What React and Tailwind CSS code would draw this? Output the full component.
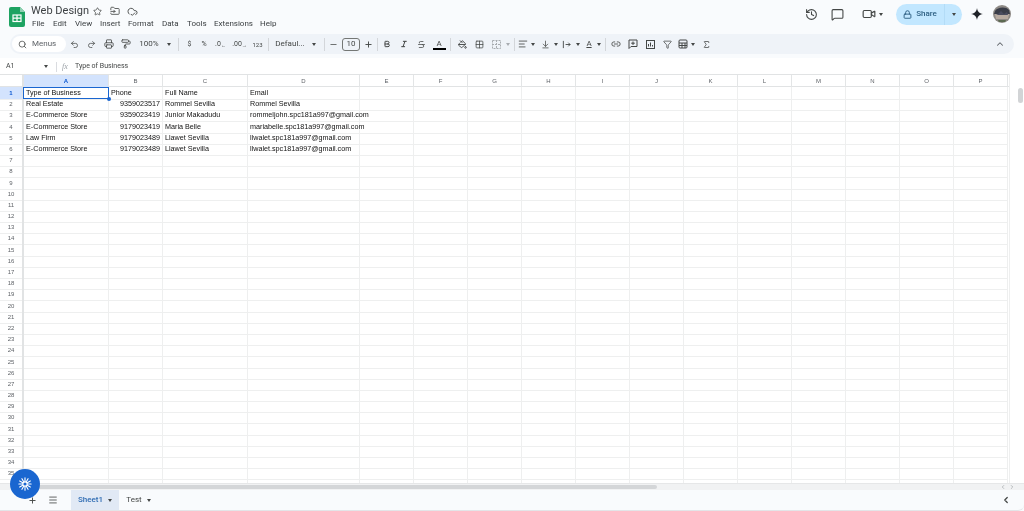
import { Fragment } from 'react';
import {
  Search, Undo2, Redo2, Printer, PaintRoller, Minus, Plus, Bold, Italic, Strikethrough,
  PaintBucket, Grid2x2, AlignLeft, ArrowDownToLine, Link2, Filter, Sigma, ChevronUp, ChevronLeft,
  ChevronRight, Star, FolderInput, CloudCheck, History, MessageSquare, Video, Lock, Menu,
} from 'lucide-react';

const menus = [
  ['File', 'w-[21px]'],
  ['Edit', 'w-[22px]'],
  ['View', 'w-[25px]'],
  ['Insert', 'w-[28px]'],
  ['Format', 'w-[34px]'],
  ['Data', 'w-[25px]'],
  ['Tools', 'w-[27px]'],
  ['Extensions', 'w-[46px]'],
  ['Help', 'w-[25px]'],
];

const columns = ['A', 'B', 'C', 'D', 'E', 'F', 'G', 'H', 'I', 'J', 'K', 'L', 'M', 'N', 'O', 'P'];

const data = [
  ['Type of Business', 'Phone', 'Full Name', 'Email'],
  ['Real Estate', '9359023517', 'Rommel Sevilla', 'Rommel Sevilla'],
  ['E-Commerce Store', '9359023419', 'Junior Makadudu', 'rommeljohn.spc181a997@gmail.com'],
  ['E-Commerce Store', '9179023419', 'Maria Belle', 'mariabelle.spc181a997@gmail.com'],
  ['Law Firm', '9179023489', 'Llawet Sevilla', 'llwalet.spc181a997@gmail.com'],
  ['E-Commerce Store', '9179023489', 'Llawet Sevilla', 'llwalet.spc181a997@gmail.com'],
];

const gridCols = 'grid grid-cols-[24px_85px_54px_85px_112px_repeat(12,54px)]';

const Caret = ({ className = '' }) => (
  <span className={`block shrink-0 w-0 h-0 border-x-[2.5px] border-x-transparent border-t-[3px] border-t-[#444746] ${className}`} />
);

const Divider = ({ w = 'w-[10px]' }) => (
  <div className={`${w} flex justify-center`}>
    <div className="w-px h-[13px] bg-[#d3d6da]" />
  </div>
);

const Tool = ({ w, children }) => (
  <div className={`${w} h-full flex items-center justify-center text-[#444746]`}>{children}</div>
);

const ToolCaret = ({ w = 'w-[9px]' }) => (
  <Tool w={w}>
    <Caret />
  </Tool>
);

const Toolbar = () => (
  <div className="mx-[10px] h-[20px] rounded-full bg-[#eff3f8] flex items-center pl-[2px] text-[#444746]">
    <div className="w-[54px] h-[16px] rounded-full bg-white flex items-center pl-[6px] gap-[5px] text-[8px]">
      <Search size={9} strokeWidth={2} />
      <span className="text-[#5f6368]">Menus</span>
    </div>
    <Tool w="w-[17px]"><Undo2 size={9} strokeWidth={2} /></Tool>
    <Tool w="w-[17px]"><Redo2 size={9} strokeWidth={2} /></Tool>
    <Tool w="w-[17px]"><Printer size={10} strokeWidth={2} /></Tool>
    <Tool w="w-[17px]"><PaintRoller size={10} strokeWidth={2} /></Tool>
    <Tool w="w-[30px]"><span className="text-[8px]">100%</span></Tool>
    <ToolCaret />
    <Divider />
    <Tool w="w-[13px]"><span className="text-[7px]">$</span></Tool>
    <Tool w="w-[16px]"><span className="text-[7px]">%</span></Tool>
    <Tool w="w-[17px]"><span className="text-[7px]">.0<sub className="text-[5px]">←</sub></span></Tool>
    <Tool w="w-[21px]"><span className="text-[7px]">.00<sub className="text-[5px]">→</sub></span></Tool>
    <Tool w="w-[15px]"><span className="text-[6px]">123</span></Tool>
    <Divider w="w-[6px]" />
    <Tool w="w-[38px]"><span className="text-[8px]">Defaul...</span></Tool>
    <ToolCaret w="w-[10px]" />
    <Divider />
    <Tool w="w-[9px]"><Minus size={9} strokeWidth={2} /></Tool>
    <div className="ml-[4px] w-[18px] h-[13px] rounded-[3px] border border-[#747775] flex items-center justify-center text-[8px]">10</div>
    <Tool w="w-[16px]"><Plus size={9} strokeWidth={2.5} /></Tool>
    <Divider w="w-[2px]" />
    <Tool w="w-[18px]"><Bold size={8} strokeWidth={3} /></Tool>
    <Tool w="w-[16px]"><Italic size={8} strokeWidth={3} /></Tool>
    <Tool w="w-[19px]"><Strikethrough size={9} strokeWidth={2} /></Tool>
    <Tool w="w-[16px]">
      <div className="flex flex-col items-center">
        <span className="text-[8px] leading-[9px]">A</span>
        <div className="w-[13px] h-[2px] bg-black" />
      </div>
    </Tool>
    <Divider w="w-[7px]" />
    <Tool w="w-[16px]"><PaintBucket size={9} strokeWidth={2.5} /></Tool>
    <Tool w="w-[18px]"><Grid2x2 size={9} strokeWidth={2} /></Tool>
    <Tool w="w-[16px]">
      <svg width="9" height="9" viewBox="0 0 9 9" fill="none" stroke="#a8acb0" strokeWidth="1" strokeDasharray="2 1">
        <rect x="0.5" y="0.5" width="8" height="8" />
        <path d="M4.500 0v9M0 4.500h9" />
      </svg>
    </Tool>
    <Tool w="w-[8px]"><Caret className="border-t-[#a8acb0]" /></Tool>
    <Divider w="w-[4px]" />
    <Tool w="w-[13px]"><AlignLeft size={10} strokeWidth={2} /></Tool>
    <ToolCaret w="w-[7px]" />
    <div className="w-[1px]" />
    <Tool w="w-[16px]"><ArrowDownToLine size={9} strokeWidth={2} /></Tool>
    <ToolCaret w="w-[5px]" />
    <Tool w="w-[17px]">
      <svg width="9" height="9" viewBox="0 0 10 10" fill="none" stroke="currentColor" strokeWidth="1">
        <path d="M1.500 1v8M4 5h5M7 3l2 2-2 2" />
      </svg>
    </Tool>
    <ToolCaret w="w-[6px]" />
    <Tool w="w-[16px]"><span className="text-[8px] underline">A</span></Tool>
    <ToolCaret w="w-[3px]" />
    <Divider w="w-[11px]" />
    <Tool w="w-[10px]"><Link2 size={10} strokeWidth={2} /></Tool>
    <Tool w="w-[23px]">
      <svg width="10" height="10" viewBox="0 0 10 10" fill="none" stroke="currentColor" strokeWidth="1">
        <path d="M1 1h8v6.500H3L1 9.500zM5 2.500v3.500M3.200 4.200h3.600" />
      </svg>
    </Tool>
    <Tool w="w-[12px]">
      <svg width="9" height="9" viewBox="0 0 9 9" fill="none" stroke="currentColor" strokeWidth="1">
        <rect x="0.500" y="0.500" width="8" height="8" />
        <path d="M2.500 6.500V4M4.500 6.500V2.500M6.500 6.500V5" />
      </svg>
    </Tool>
    <Tool w="w-[22px]"><Filter size={9} strokeWidth={2} /></Tool>
    <Tool w="w-[10px]">
      <svg width="10" height="10" viewBox="0 0 10 10" fill="none" stroke="currentColor" strokeWidth="1" className="shrink-0">
        <rect x="1" y="1" width="8" height="8" rx="1" />
        <path d="M1 4h8M4 4v5M7 4v5M1 6.500h8" />
      </svg>
    </Tool>
    <ToolCaret />
    <Tool w="w-[19px]"><Sigma size={9} strokeWidth={2} /></Tool>
    <div className="ml-auto mr-[9px] text-[#5f6368]"><ChevronUp size={10} strokeWidth={2.5} /></div>
  </div>
);

const Header = () => (
  <div className="h-[34px] flex pl-[9px] pt-[5px]">
    <svg width="16" height="20" viewBox="0 0 16 20" className="mt-[2px]">
      <path d="M2 0h9l5 5v13a2 2 0 0 1-2 2H2a2 2 0 0 1-2-2V2a2 2 0 0 1 2-2z" fill="#1ea362" />
      <path d="M11 0l5 5h-5z" fill="#8ed1b1" />
      <rect x="4" y="8" width="8" height="6.500" fill="none" stroke="#fff" strokeWidth="1.200" />
      <path d="M4 11.200h8M8 8v6.500" stroke="#fff" strokeWidth="1.200" />
    </svg>
    <div className="ml-[6px] flex flex-col">
      <div className="flex items-center h-[12px] text-[#444746]">
        <span className="text-[11px] text-[#3c4043] w-[62px]">Web Design</span>
        <Star size={9} strokeWidth={2} />
        <FolderInput size={10} strokeWidth={2} className="ml-[8px]" />
        <CloudCheck size={11} strokeWidth={2} className="ml-[7px]" />
      </div>
      <div className="flex mt-[1px] text-[8px] leading-[12px] text-[#3c4043]">
        {menus.map(([label, w]) => (
          <span key={label} className={`${w} pl-[1px]`}>{label}</span>
        ))}
      </div>
    </div>
    <div className="ml-auto flex items-center h-[20px] -mt-[1px] mr-[13px] text-[#444746]">
      <History size={13} strokeWidth={2} />
      <MessageSquare size={13} strokeWidth={2} className="ml-[13px]" />
      <Video size={14} strokeWidth={2} className="ml-[18px]" />
      <Caret className="ml-[3px]" />
      <div className="ml-[13px] w-[66px] h-[21px] rounded-full bg-[#c2e7ff] flex items-center text-[#2d5f82]">
        <div className="w-[49px] h-full flex items-center justify-center gap-[4px] border-r border-r-[#b3dcf7]">
          <Lock size={9} strokeWidth={2.5} />
          <span className="text-[8px] font-medium">Share</span>
        </div>
        <div className="flex-1 flex justify-center"><Caret className="border-t-[#1f3b52]" /></div>
      </div>
      <svg width="12" height="12" viewBox="0 0 14 14" className="ml-[9px]">
        <path d="M7 0c.6 4 2.500 6.200 7 7-4.500.8-6.400 3-7 7-.6-4-2.500-6.200-7-7 4.500-.8 6.400-3 7-7z" fill="#1f2328" />
      </svg>
      <svg width="18" height="18" viewBox="0 0 18 18" className="ml-[10px]">
        <circle cx="9" cy="9" r="9" fill="#8e8a86" />
        <path d="M2 6c2-4 11-5 14-1l1 4H1z" fill="#3a3d48" />
        <path d="M2 9h14l-1 5H3z" fill="#b7aaa0" />
        <path d="M5 9l3-3 3 3 3-2 1 3H3z" fill="#4a4c5e" />
        <path d="M5 15h8l-1 2H6z" fill="#5c6a52" />
      </svg>
    </div>
  </div>
);

const FormulaBar = () => (
  <div className="mt-[4px] h-[16px] pt-[1px] bg-white flex items-center text-[7px] text-[#444746]">
    <span className="w-[44px] pl-[6px]">A1</span>
    <Caret />
    <div className="ml-[8px] w-px h-[10px] bg-[#dadce0]" />
    <span className="ml-[5px] w-[13px] italic font-['Liberation_Serif',serif] text-[8px] text-[#9aa0a6]">fx</span>
    <span>Type of Business</span>
  </div>
);

const Grid = () => (
  <div className="relative flex-1 min-h-0 overflow-hidden bg-white font-['Liberation_Sans',sans-serif]">
    <div className={`${gridCols} h-[13px] border-y border-y-[#e1e3e4] bg-white text-[6px] leading-[12px] text-[#5f6368]`}>
      <div className="border-r-2 border-r-[#e1e3e4]" />
      {columns.map((c) => (
        <div
          key={c}
          className={`text-center border-r border-r-[#e3e5e6] ${c === 'A' ? 'bg-[#d3e3fd] font-bold text-[#0b57d0]' : ''}`}
        >
          {c}
        </div>
      ))}
    </div>
    {Array.from({ length: 36 }, (_, r) => (
      <div key={r} className={`${gridCols} h-[11.2px] text-[7.2px] leading-[12px] text-[#111111]`}>
        <div
          className={`text-center text-[6px] border-r-2 border-r-[#e1e3e4] border-b border-b-[#eeefef] ${
            r === 0 ? 'bg-[#d3e3fd] font-bold text-[#0b57d0]' : 'text-[#5f6368]'
          }`}
        >
          {r + 1}
        </div>
        {columns.map((c, i) => {
          const value = data[r]?.[i];
          const isNumber = i === 1 && r > 0;
          return (
            <div
              key={c}
              className={`border-r border-b border-r-[#eeefef] border-b-[#eeefef] px-[2px] whitespace-nowrap ${
                isNumber ? 'text-right' : ''
              }`}
            >
              {value}
            </div>
          );
        })}
      </div>
    ))}
    {/* active cell */}
    <div className="absolute left-[23px] top-[13px] w-[86px] h-[12px] border-[1.5px] border-[#1a66d0]" />
    <div className="absolute left-[107px] top-[23px] w-[4px] h-[4px] rounded-full bg-[#1a66d0]" />
    {/* vertical scrollbar */}
    <div className="absolute right-0 top-0 bottom-0 w-[15px] bg-white border-l border-l-[#eeefef]">
      <div className="absolute left-[8px] top-[14px] w-[5px] h-[15px] rounded-full bg-[#d2d4d6]" />
    </div>
    {/* horizontal scrollbar */}
    <div className="absolute left-0 right-0 bottom-0 h-[7px] bg-[#f1f2f3] border-t border-t-[#e6e7e8]">
      <div className="absolute left-[24px] top-[1px] w-[633px] h-[4px] rounded-full bg-[#d4d6d8]" />
      <ChevronLeft size={6} className="absolute right-[18px] top-0 text-[#80868b]" />
      <ChevronRight size={6} className="absolute right-[9px] top-0 text-[#80868b]" />
    </div>
  </div>
);

const Tabs = () => (
  <div className="h-[21px] flex items-stretch pl-[26px] pr-[13px] text-[8px] text-[#444746] rounded-br-[6px] border-b border-b-[#e3e5e8]">
    <div className="w-[12px] flex items-center justify-center"><Plus size={9} strokeWidth={2.5} /></div>
    <div className="ml-[9px] w-[12px] flex items-center justify-center"><Menu size={10} strokeWidth={2} /></div>
    <div className="ml-[12px] w-[48px] flex items-center justify-center gap-[5px] bg-[#e1e9f5] text-[#2f6cb3] font-medium">
      Sheet1
      <Caret className="border-t-[#2f6cb3]" />
    </div>
    <div className="w-[39px] flex items-center justify-center gap-[5px]">
      Test
      <Caret />
    </div>
    <div className="ml-auto flex items-center"><ChevronLeft size={10} strokeWidth={3} /></div>
  </div>
);

const App = () => (
  <div className="relative w-[1024px] h-[511px] overflow-hidden bg-[#f9fbfd] flex flex-col font-['Roboto',sans-serif] blur-[0.35px]">
    <Header />
    <Toolbar />
    <FormulaBar />
    <Grid />
    <Tabs />
    {/* floating assistant button */}
    <div className="absolute left-[10px] top-[469px] w-[30px] h-[30px] rounded-full bg-[#1a66d0] flex items-center justify-center">
      <svg width="14" height="14" viewBox="0 0 16 16" stroke="#fff" strokeWidth="1.300" strokeLinecap="round">
        {[0, 30, 60, 90, 120, 150].map((a) => (
          <Fragment key={a}>
            <path d="M8 1v14" transform={`rotate(${a} 8 8)`} />
          </Fragment>
        ))}
        <circle cx="8" cy="8" r="2.500" fill="#1a66d0" />
      </svg>
    </div>
  </div>
);

export default App;
